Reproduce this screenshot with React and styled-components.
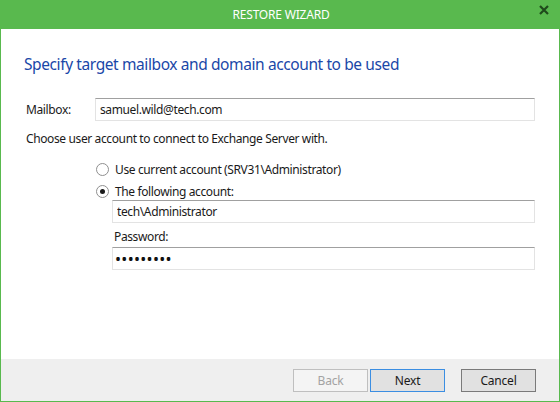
import styled, { createGlobalStyle } from 'styled-components'

const GlobalStyle = createGlobalStyle`
  html, body {
    margin: 0;
    padding: 0;
    background: #fff;
  }
  body {
    font-family: "Noto Sans", "Liberation Sans", sans-serif;
    font-size: 12px;
    color: #1a1a1a;
  }
`

const Window = styled.div`
  width: 560px;
  height: 402px;
  box-sizing: border-box;
  border: 1px solid #59b94e;
  border-top: 0;
  display: flex;
  flex-direction: column;
  background: #fff;
`

const TitleBar = styled.div`
  height: 29px;
  background: #59b94e;
  display: grid;
  grid-template-columns: 1fr auto 1fr;
  align-items: center;
  color: #fff;
  font-size: 12px;
  letter-spacing: -0.2px;
`

const Title = styled.div`
  grid-column: 2;
  padding-left: 2px;
`

const CloseBtn = styled.div`
  justify-self: end;
  align-self: start;
  margin: 5px 10px 0 0;
  width: 10px;
  height: 10px;
  display: flex;
`

const Content = styled.div`
  flex: 1;
  padding: 24px 24px 0 23px;
`

const Heading = styled.h1`
  margin: 0;
  font-size: 15.5px;
  line-height: 22px;
  font-weight: 400;
  color: #1a47a8;
  letter-spacing: -0.4px;
`

const FieldRow = styled.div`
  display: flex;
  align-items: center;
  margin-top: 23px;
`

const Label = styled.label`
  width: ${(p) => p.width || 'auto'};
  flex-shrink: 0;
  padding-left: 2px;
  box-sizing: border-box;
  line-height: 16px;
  letter-spacing: -0.38px;
`

const TextBox = styled.input`
  flex: ${(p) => (p.grow ? '1 1 auto' : 'none')};
  width: 100%;
  height: 23px;
  box-sizing: border-box;
  margin: ${(p) => p.top || 0}px 0 0;
  padding: 0 4px;
  border: 1px solid #e3e3e3;
  border-top-color: #a0a0a0;
  font-family: inherit;
  font-size: 12px;
  color: #1a1a1a;
  letter-spacing: -0.38px;
  outline: none;
  background: #fff;
  display: block;
`

const Text = styled.div`
  margin-top: ${(p) => p.top || 0}px;
  padding-left: 2px;
  line-height: 16px;
  letter-spacing: -0.38px;
`

const RadioGroup = styled.div`
  margin-top: 13px;
  margin-left: 72px;
  display: flex;
  flex-direction: column;
  gap: 4px;
`

const RadioRow = styled.div`
  display: flex;
  align-items: center;
  height: 18px;
  gap: 6px;
  letter-spacing: -0.38px;
`

const RadioDot = styled.span`
  width: 11px;
  height: 11px;
  border-radius: 50%;
  border: 1px solid #8f8f8f;
  background: #fff;
  display: flex;
  align-items: center;
  justify-content: center;
  flex-shrink: 0;

  &::after {
    content: '';
    display: ${(p) => (p.checked ? 'block' : 'none')};
    width: 5px;
    height: 5px;
    border-radius: 50%;
    background: #1a1a1a;
  }
`

const AccountBlock = styled.div`
  margin-left: 88px;
  display: flex;
  flex-direction: column;
`

const PasswordBox = styled(TextBox)`
  font-size: 16px;
  letter-spacing: 0.3px;
  padding-left: 2px;
  color: #111;
`

const Footer = styled.div`
  height: 42px;
  background: #efefef;
  display: flex;
  justify-content: flex-end;
  align-items: flex-start;
  padding: 10px 23px 0 0;
  box-sizing: border-box;
`

const Button = styled.button`
  width: 75px;
  height: 23px;
  margin: 0;
  margin-left: ${(p) => p.gap || 0}px;
  padding: 0;
  font-family: inherit;
  font-size: 12px;
  letter-spacing: -0.2px;
  background: ${(p) => (p.disabled ? '#f4f4f4' : '#e1e1e1')};
  color: ${(p) => (p.disabled ? '#a3a3a3' : '#1a1a1a')};
  border: 1px solid
    ${(p) => (p.disabled ? '#bfbfbf' : p.primary ? '#3b8ee2' : '#7a7a7a')};
`

export default function App() {
  return (
    <>
      <GlobalStyle />
      <Window>
        <TitleBar>
          <Title>RESTORE WIZARD</Title>
          <CloseBtn>
            <svg width="10" height="10" viewBox="0 0 10 10">
              <path d="M1 1 L9 9 M9 1 L1 9" stroke="#1f4a1b" strokeWidth="2.2" />
            </svg>
          </CloseBtn>
        </TitleBar>
        <Content>
          <Heading>Specify target mailbox and domain account to be used</Heading>
          <FieldRow>
            <Label width="71px">Mailbox:</Label>
            <TextBox grow readOnly value="samuel.wild@tech.com" />
          </FieldRow>
          <Text top={10}>Choose user account to connect to Exchange Server with.</Text>
          <RadioGroup>
            <RadioRow>
              <RadioDot />
              Use current account (SRV31\Administrator)
            </RadioRow>
            <RadioRow>
              <RadioDot checked />
              The following account:
            </RadioRow>
          </RadioGroup>
          <AccountBlock>
            <TextBox readOnly value="tech\Administrator" />
            <Text top={6}>Password:</Text>
            <PasswordBox type="password" readOnly value="password1" top={2} />
          </AccountBlock>
        </Content>
        <Footer>
          <Button disabled>Back</Button>
          <Button primary gap={2}>Next</Button>
          <Button gap={16}>Cancel</Button>
        </Footer>
      </Window>
    </>
  )
}
